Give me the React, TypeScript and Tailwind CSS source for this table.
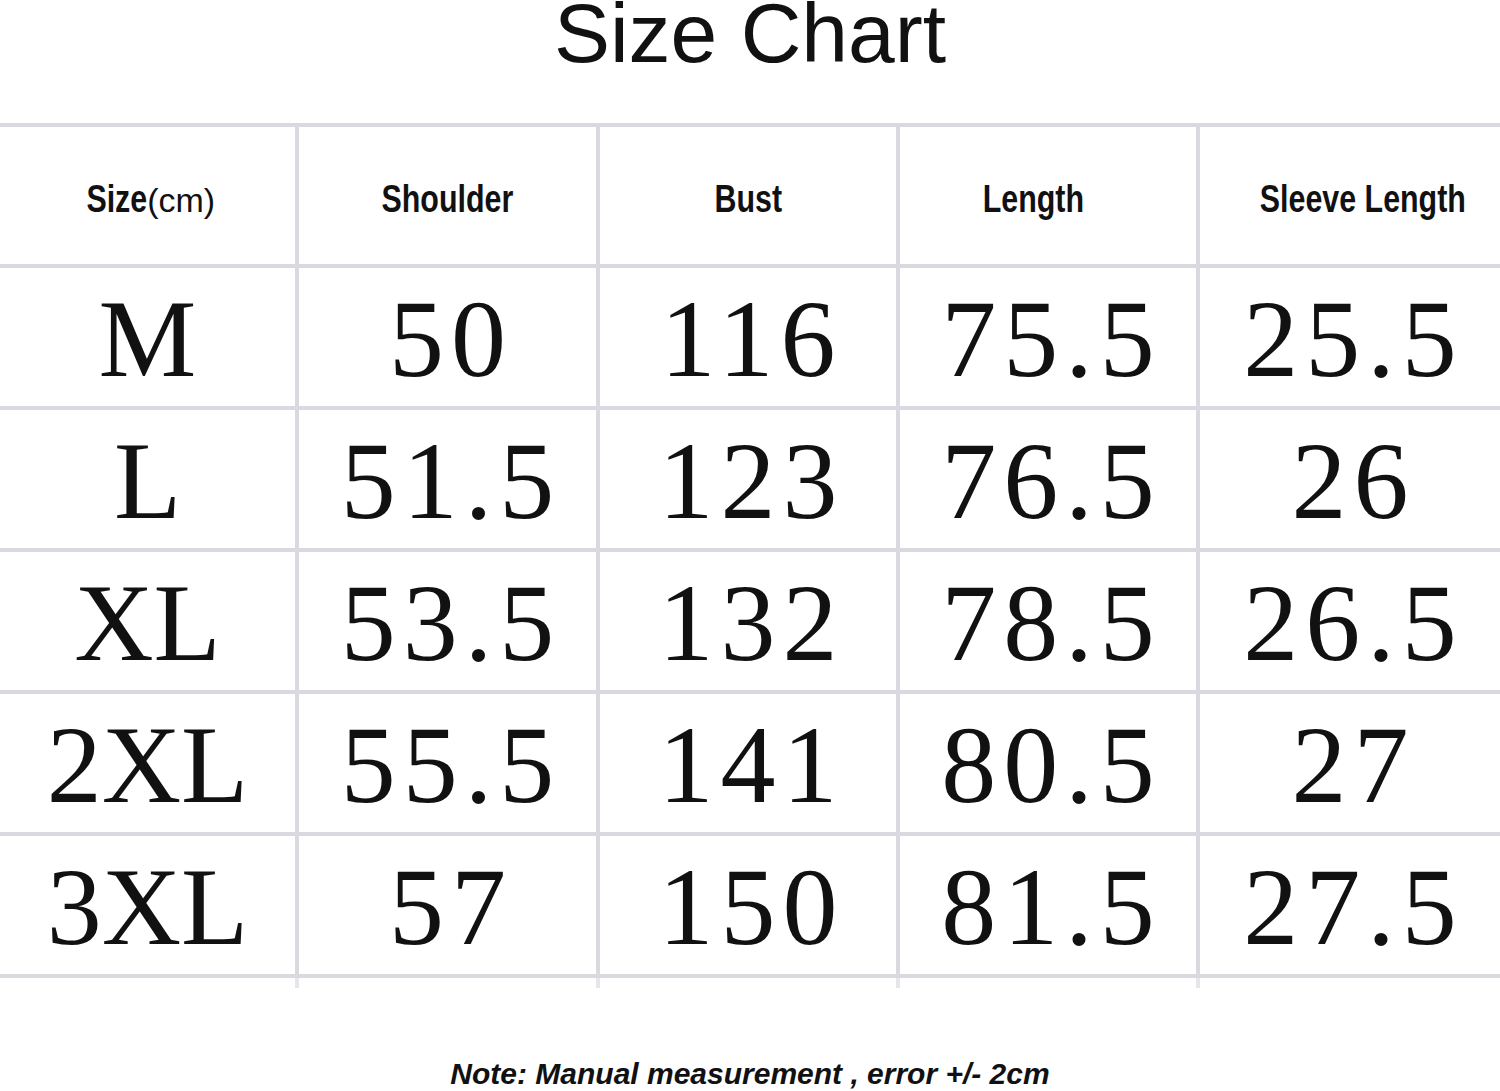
const headers = [
  { label: "Size", unit: "(cm)", pad: "pr-[6px]" },
  { label: "Shoulder", unit: "", pad: "" },
  { label: "Bust", unit: "", pad: "" },
  { label: "Length", unit: "", pad: "pr-[30px]" },
  { label: "Sleeve Length", unit: "", pad: "pl-[26px]" },
]

const rows = [
  ["M", "50", "116", "75.5", "25.5"],
  ["L", "51.5", "123", "76.5", "26"],
  ["XL", "53.5", "132", "78.5", "26.5"],
  ["2XL", "55.5", "141", "80.5", "27"],
  ["3XL", "57", "150", "81.5", "27.5"],
]

const cols = "grid grid-cols-[295px_297px_296px_296px_300px] gap-x-[4px]"

export default function App() {
  return (
    <div className="h-[1091px] w-[1500px] overflow-hidden bg-white text-[#111]">
      <div className="flex h-[123px] justify-center">
        <h1 className="font-['Liberation_Sans',Arial,sans-serif] text-[84px] leading-[0.8]">
          Size Chart
        </h1>
      </div>

      <div className={`${cols} gap-y-[4px] bg-[#d9d9df] pt-[4px] pb-[4px]`}>
        {headers.map((h) => (
          <div
            key={h.label}
            className={`flex h-[137px] items-center justify-center bg-white pt-[6px] ${h.pad}`}
          >
            <span className="inline-block origin-center scale-x-[0.8] font-['Liberation_Sans',Arial,sans-serif] text-[38px] font-bold leading-none whitespace-nowrap">
              {h.label}
              {h.unit && (
                <span className="inline-block origin-left scale-x-[1.25] font-normal text-[34px]">
                  {h.unit}
                </span>
              )}
            </span>
          </div>
        ))}
        {rows.map((r) =>
          r.map((v, i) => (
            <div
              key={r[0] + i}
              className="flex h-[138px] items-center justify-center bg-white pt-[4px]"
            >
              <span
                className={`font-['Liberation_Serif','Times_New_Roman',serif] text-[110px] leading-none ${
                  i === 0 ? "" : "tracking-[7px] pl-[7px]"
                }`}
              >
                {v}
              </span>
            </div>
          ))
        )}
      </div>
      <div className={`${cols} h-[10px] bg-[#e6e6ea]`}>
        {headers.map((h) => (
          <div key={h.label} className="bg-white" />
        ))}
      </div>

      <p className="mt-[71px] text-center font-['Liberation_Sans',Arial,sans-serif] text-[30px] font-bold italic leading-none">
        Note: Manual measurement , error +/- 2cm
      </p>
    </div>
  )
}
